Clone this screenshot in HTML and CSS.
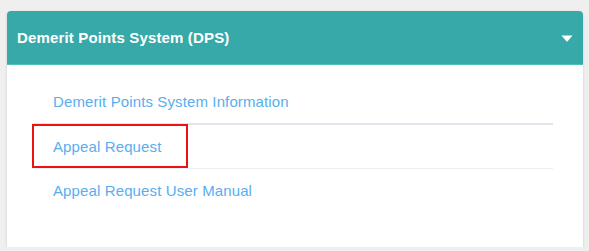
FILE: index.html
```html
<!DOCTYPE html>
<html lang="en">
<head>
  <meta charset="UTF-8" />
  <title>Demerit Points System</title>
  <link rel="stylesheet" href="styles.css">
</head>
<body>
  <div class="panel">
    <div class="panel-head">
      <span class="panel-title">Demerit Points System (DPS)</span>
      <svg class="caret" width="12" height="7" viewBox="0 0 12 7"><path d="M0.5 0.5h11L6.6 6.3a0.8 0.8 0 0 1-1.2 0z" fill="#fff"/></svg>
    </div>
    <div class="panel-body">
      <ul class="menu">
        <li class="menu-item first"><a href="#">Demerit Points System Information</a></li>
        <li class="menu-item"><a href="#">Appeal Request</a><span class="highlight"></span></li>
        <li class="menu-item"><a href="#">Appeal Request User Manual</a></li>
      </ul>
    </div>
  </div>
</body>
</html>
```

FILE: styles.css
```css
body {
  margin: 0;
  padding: 11px 6px 0 7px;
  background: #efefef;
  font-family: "Liberation Sans", Arial, sans-serif;
}
.panel {
  width: 576px;
  background: #fff;
  border-radius: 4px 4px 0 0;
  box-shadow: 0 1px 3px rgba(0,0,0,0.15);
}
.panel-head {
  display: flex;
  align-items: center;
  justify-content: space-between;
  height: 53px;
  padding: 0 10px 0 10px;
  background: #38a9a9;
  border-bottom: 1px solid #4cc0bd;
  border-radius: 4px 4px 0 0;
}
.panel-title {
  color: #fff;
  font-weight: bold;
  font-size: 15px;
  letter-spacing: 0.15px;
}
.caret {
  margin-top: 2px;
}
.panel-body {
  padding: 15px 30px 35px 26px;
}
.menu {
  list-style: none;
  margin: 0;
  padding: 0;
}
.menu-item {
  position: relative;
  height: 43px;
  display: flex;
  align-items: center;
  padding-left: 20px;
  border-bottom: 1px solid #e8eef4;
}
.menu-item.first {
  border-bottom: 2px solid #e1e6ec;
}
.menu-item:last-child {
  border-bottom: none;
}
.menu-item a {
  color: #58aef0;
  font-size: 15px;
  letter-spacing: 0.12px;
  text-decoration: none;
}
/* red annotation box drawn over the row */
.highlight {
  position: absolute;
  left: -1px;
  top: -1px;
  width: 152px;
  height: 40px;
  border: 2px solid #ee1111;
}
```
